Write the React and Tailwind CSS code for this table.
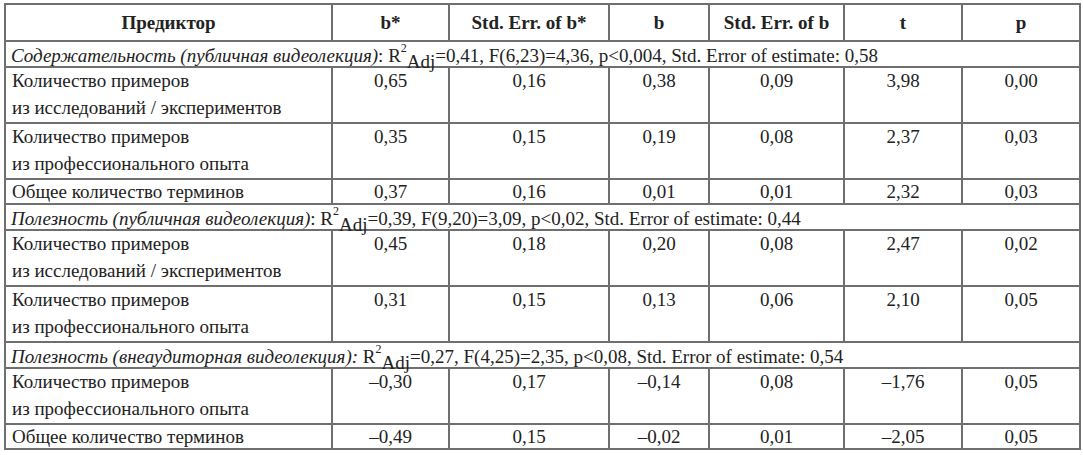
import React from 'react';

const cell = 'border-2 border-[#6f6f6f] align-top p-0';

function Section({ label, colon, stats }) {
  return (
    <tr>
      <td colSpan={7} className={cell}>
        <div className="h-[24px] leading-[24px] pl-[5px] whitespace-nowrap">
          <span className="italic">{label}</span>
          {colon === 'italic' ? <span className="italic">:</span> : ':'}
          {' R'}
          <span className="text-[12px] leading-none align-[10px]">2</span>
          <span className="leading-none align-[-6px]">Adj</span>
          {stats}
        </div>
      </td>
    </tr>
  );
}

function Row({ lines, values }) {
  const two = lines.length > 1;
  const h = two ? 'h-[54px]' : 'h-[23px]';
  return (
    <tr>
      <td className={cell}>
        <div className={`${h} pl-[6px] whitespace-nowrap`}>
          <div className={two ? 'leading-[25px]' : 'leading-[23px]'}>{lines[0]}</div>
          {two && <div className="leading-[30px]">{lines[1]}</div>}
        </div>
      </td>
      {values.map((v, i) => (
        <td key={i} className={cell}>
          <div className={`${h} ${two ? 'leading-[25px]' : 'leading-[23px]'} text-center`}>{v}</div>
        </td>
      ))}
    </tr>
  );
}

function Head({ children }) {
  return (
    <th className={cell}>
      <div className="h-[35px] pt-[2px] flex items-center justify-center font-bold">{children}</div>
    </th>
  );
}

const research = ['Количество примеров', 'из исследований / экспериментов'];
const practice = ['Количество примеров', 'из профессионального опыта'];
const terms = ['Общее количество терминов'];

export default function App() {
  return (
    <div className="w-[1083px] h-[455px] bg-white pt-[3px] pl-[4px]">
      <table className="border-collapse table-fixed w-[1075px] text-[#222] text-[19px] font-['Liberation_Serif',serif]">
        <colgroup>
          <col className="w-[327px]" />
          <col className="w-[117px]" />
          <col className="w-[160px]" />
          <col className="w-[100px]" />
          <col className="w-[135px]" />
          <col className="w-[118px]" />
          <col className="w-[118px]" />
        </colgroup>
        <thead>
          <tr>
            <Head>Предиктор</Head>
            <Head>b*</Head>
            <Head>Std. Err. of b*</Head>
            <Head>b</Head>
            <Head>Std. Err. of b</Head>
            <Head>t</Head>
            <Head>p</Head>
          </tr>
        </thead>
        <tbody>
          <Section
            label="Содержательность (публичная видеолекция)"
            stats="=0,41, F(6,23)=4,36, p<0,004, Std. Error of estimate: 0,58"
          />
          <Row lines={research} values={['0,65', '0,16', '0,38', '0,09', '3,98', '0,00']} />
          <Row lines={practice} values={['0,35', '0,15', '0,19', '0,08', '2,37', '0,03']} />
          <Row lines={terms} values={['0,37', '0,16', '0,01', '0,01', '2,32', '0,03']} />
          <Section
            label="Полезность (публичная видеолекция)"
            stats="=0,39, F(9,20)=3,09, p<0,02, Std. Error of estimate: 0,44"
          />
          <Row lines={research} values={['0,45', '0,18', '0,20', '0,08', '2,47', '0,02']} />
          <Row lines={practice} values={['0,31', '0,15', '0,13', '0,06', '2,10', '0,05']} />
          <Section
            label="Полезность (внеаудиторная видеолекция)"
            colon="italic"
            stats="=0,27, F(4,25)=2,35, p<0,08, Std. Error of estimate: 0,54"
          />
          <Row lines={practice} values={['–0,30', '0,17', '–0,14', '0,08', '–1,76', '0,05']} />
          <Row lines={terms} values={['–0,49', '0,15', '–0,02', '0,01', '–2,05', '0,05']} />
        </tbody>
      </table>
    </div>
  );
}
